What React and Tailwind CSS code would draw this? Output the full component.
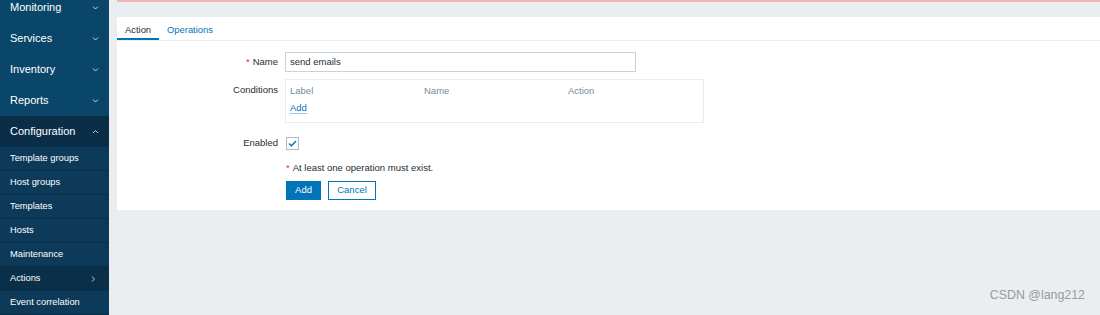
import React from "react";

const mainMenu = ["Monitoring", "Services", "Inventory", "Reports"];
const subMenu = [
  "Template groups",
  "Host groups",
  "Templates",
  "Hosts",
  "Maintenance",
  "Actions",
  "Event correlation",
];

const Chevron = ({ dir = "down" }) => {
  const d =
    dir === "down" ? "M1 1.5l2.5 2.5 2.5-2.5" : dir === "up" ? "M1 4l2.5-2.5L6 4" : "M2 0.5l2.5 2.5L2 5.5";
  return (
    <svg width="7" height="6" viewBox="0 0 7 6" className="shrink-0">
      <path d={d} fill="none" stroke="rgba(255,255,255,0.75)" strokeWidth="1" />
    </svg>
  );
};

const Sidebar = () => (
  <aside className="w-[109px] shrink-0 bg-[#0a466a] text-white overflow-hidden">
    <ul className="-mt-[8px]">
      {mainMenu.map((item) => (
        <li key={item} className="h-[31px] flex items-center justify-between pl-[10px] pr-[10px] text-[11px]">
          <span>{item}</span>
          <Chevron />
        </li>
      ))}
      <li className="h-[31px] flex items-center justify-between pl-[10px] pr-[10px] text-[11px] bg-[#0a2e47]">
        <span>Configuration</span>
        <Chevron dir="up" />
      </li>
      {subMenu.map((item) => (
        <li
          key={item}
          className={`h-[24px] flex items-center justify-between pl-[10px] pr-[12px] text-[9.3px] border-b border-[#08304a] ${
            item === "Actions" ? "bg-[#0a3049]" : "bg-[#0c3a58]"
          }`}
        >
          <span>{item}</span>
          {item === "Actions" && <Chevron dir="right" />}
        </li>
      ))}
    </ul>
  </aside>
);

const Row = ({ label, required, children, top }) => (
  <div className={`flex ${top ? "items-start" : "items-center"}`}>
    <div className={`w-[168px] pr-[7px] text-right text-[9.5px] text-[#1f2c33] ${top ? "pt-[4px]" : ""}`}>
      {required && <span className="text-[#e33734] mr-[3px]">*</span>}
      {label}
    </div>
    {children}
  </div>
);

export default function App() {
  return (
    <div
      className="relative flex h-[315px] w-[1100px] overflow-hidden bg-[#ebeef0]"
      style={{ fontFamily: '"Liberation Sans", Arial, sans-serif' }}
    >
      <Sidebar />
      <main className="flex-1 pl-[8px]">
        <div className="h-[2px] border-l border-b-2 border-[#f2b5b5] bg-[#fbe9e9]" />
        <div className="mt-[15px] bg-white h-[193px]">
          <div className="flex h-[24px] border-b border-[#ebeef0] text-[9.4px]">
            <div className="px-[8px] pt-[5px] flex items-center text-[#1f2c33] border-b-2 border-[#0275b8]">Action</div>
            <div className="px-[8px] pt-[3px] flex items-center text-[#0275b8]">Operations</div>
          </div>
          <div className="pt-[11px] flex flex-col">
            <Row label="Name" required>
              <div className="w-[351px] h-[20px] border border-[#c8d2d7] flex items-center px-[4px] text-[9.5px] text-[#1f2c33]">
                send emails
              </div>
            </Row>
            <div className="h-[7px]" />
            <Row label="Conditions" top>
              <div className="w-[419px] h-[44px] border border-[#ebeef0] px-[4px] pt-[4px] text-[9.5px]">
                <div className="flex text-[#768d99]">
                  <span className="w-[134px]">Label</span>
                  <span className="w-[144px]">Name</span>
                  <span>Action</span>
                </div>
                <div className="mt-[3px]">
                  <span className="text-[#0275b8] border-b border-[#0275b8]/40">Add</span>
                </div>
              </div>
            </Row>
            <div className="h-[13px]" />
            <Row label="Enabled">
              <div className="ml-[1px] w-[13px] h-[13px] border border-[#acbbc2] flex items-center justify-center">
                <svg width="9" height="7" viewBox="0 0 9 7">
                  <path d="M1 3.5l2.5 2.2L8 1" fill="none" stroke="#0275b8" strokeWidth="1.4" />
                </svg>
              </div>
            </Row>
            <div className="h-[11px]" />
            <div className="pl-[169px] text-[9.5px] text-[#1f2c33]">
              <span className="text-[#e33734] mr-[3px]">*</span>At least one operation must exist.
            </div>
            <div className="pl-[169px] mt-[5px] flex gap-[7px] text-[9.5px]">
              <button className="w-[35px] h-[19px] bg-[#0275b8] text-white border border-[#0275b8]">Add</button>
              <button className="w-[48px] h-[19px] bg-white text-[#0275b8] border border-[#0275b8]">Cancel</button>
            </div>
          </div>
        </div>
      </main>
      <div className="absolute right-[15px] bottom-[10px] text-[12.4px] text-[#9a9a9a]">CSDN @lang212</div>
    </div>
  );
}
